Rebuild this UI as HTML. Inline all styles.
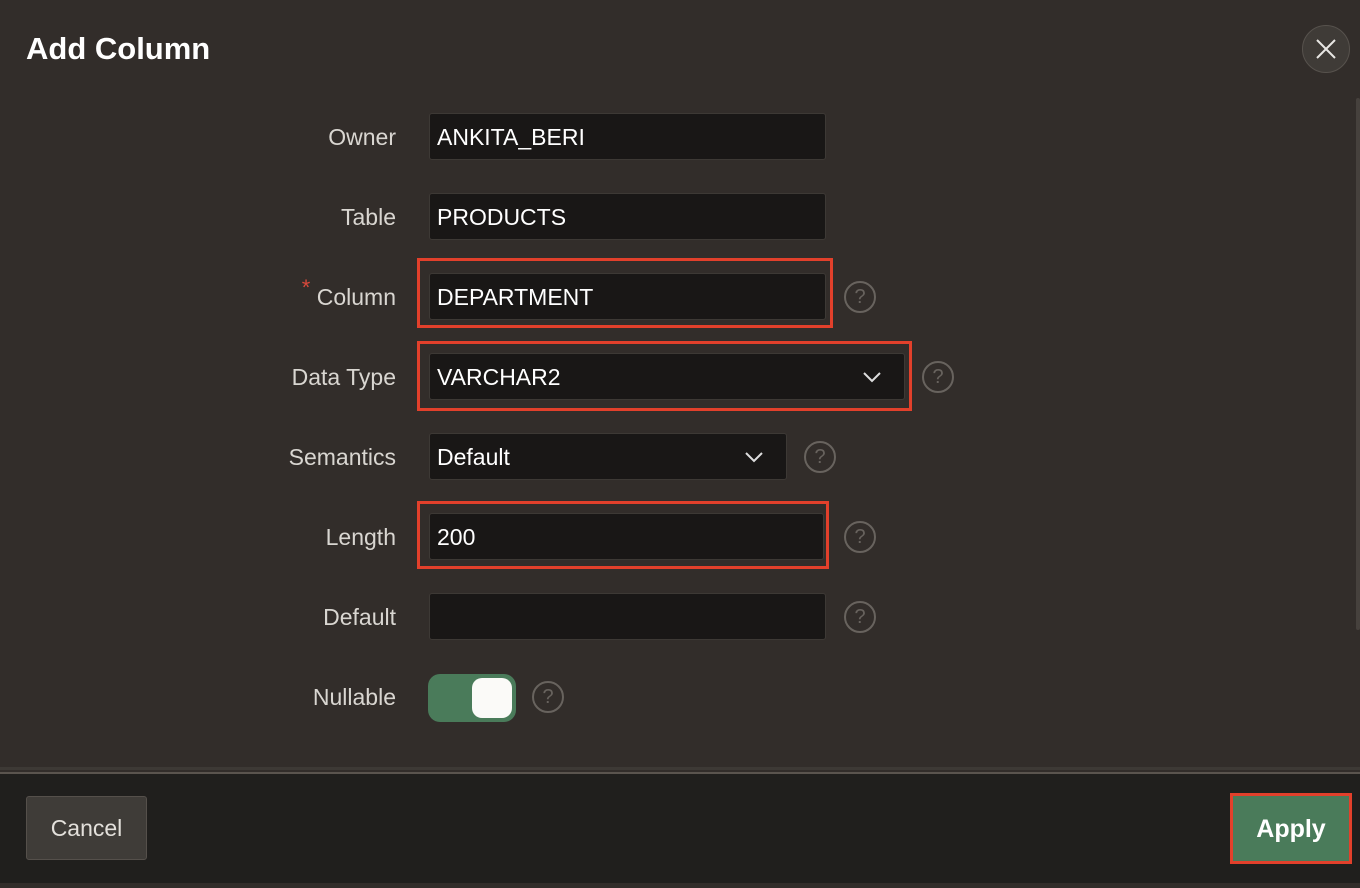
<!DOCTYPE html>
<html><head><meta charset="utf-8"><style>
*{box-sizing:border-box;margin:0;padding:0}
body{width:1360px;height:888px;background:#322d2a;font-family:"Liberation Sans",sans-serif;position:relative;overflow:hidden}
.abs{position:absolute}
h1{position:absolute;left:26px;top:31px;font-size:31px;font-weight:bold;color:#fff;letter-spacing:0px}
.close{left:1302px;top:25px;width:48px;height:48px;border-radius:50%;background:#3f3b37;border:1px solid #57524d}
.lbl{position:absolute;right:964px;font-size:23px;color:#d9d6d1;text-align:right;height:46px;line-height:48px}
.inp{position:absolute;left:429px;height:47px;background:#191716;border:1px solid #3d3935;border-radius:3px;color:#fff;font-size:23px;line-height:47px;padding-left:7px}
.red{position:absolute;border:3px solid #e2402b}
.help{position:absolute;width:32px;height:32px;border-radius:50%;border:2px solid #68635e;color:#68635e;font-size:20px;text-align:center;line-height:28px}
.chev{position:absolute;top:15px}
</style></head><body>
<h1>Add Column</h1>
<div class="abs close"><svg width="48" height="48" style="position:absolute;left:-1px;top:-1px"><path d="M15 15L33 33M33 15L15 33" stroke="#e8e6e3" stroke-width="2"/></svg></div>
<div class="abs" style="left:1356px;top:98px;width:4px;height:532px;background:#46413d;border-radius:2px"></div>

<div class="lbl" style="top:113px">Owner</div>
<div class="inp" style="top:113px;width:397px">ANKITA_BERI</div>

<div class="lbl" style="top:193px">Table</div>
<div class="inp" style="top:193px;width:397px">PRODUCTS</div>

<div class="lbl" style="top:273px"><span style="color:#d9493b;position:relative;top:-10px;font-size:22px">*</span> Column</div>
<div class="red" style="left:417px;top:258px;width:416px;height:70px"></div>
<div class="inp" style="top:273px;width:397px">DEPARTMENT</div>
<div class="help" style="left:844px;top:281px">?</div>

<div class="lbl" style="top:353px">Data Type</div>
<div class="red" style="left:417px;top:341px;width:495px;height:70px"></div>
<div class="inp" style="top:353px;width:476px">VARCHAR2<svg class="chev" style="left:432px" width="20" height="16"><path d="M2 4L10 12L18 4" stroke="#ddd" stroke-width="2" fill="none"/></svg></div>
<div class="help" style="left:922px;top:361px">?</div>

<div class="lbl" style="top:433px">Semantics</div>
<div class="inp" style="top:433px;width:358px">Default<svg class="chev" style="left:314px" width="20" height="16"><path d="M2 4L10 12L18 4" stroke="#ddd" stroke-width="2" fill="none"/></svg></div>
<div class="help" style="left:804px;top:441px">?</div>

<div class="lbl" style="top:513px">Length</div>
<div class="red" style="left:417px;top:501px;width:412px;height:68px"></div>
<div class="inp" style="top:513px;width:395px">200</div>
<div class="help" style="left:844px;top:521px">?</div>

<div class="lbl" style="top:593px">Default</div>
<div class="inp" style="top:593px;width:397px"></div>
<div class="help" style="left:844px;top:601px">?</div>

<div class="lbl" style="top:673px">Nullable</div>
<div class="abs" style="left:428px;top:674px;width:88px;height:48px;border-radius:12px;background:#4a7b5a"></div>
<div class="abs" style="left:472px;top:678px;width:40px;height:40px;border-radius:10px;background:#fbfaf8"></div>
<div class="help" style="left:532px;top:681px">?</div>

<div class="abs" style="left:0;top:767px;width:1360px;height:3px;background:#3d3935"></div>
<div class="abs" style="left:0;top:772px;width:1360px;height:116px;background:#201f1d;border-top:2px solid #5a544e"></div>
<div class="abs" style="left:26px;top:796px;width:121px;height:64px;background:#3f3c38;border:1px solid #55504b;border-radius:3px;color:#e3e0db;font-size:23px;text-align:center;line-height:62px">Cancel</div>
<div class="abs" style="left:1230px;top:793px;width:122px;height:71px;border:3px solid #e2402b;background:#4a7b5a;color:#fff;font-size:25px;font-weight:bold;text-align:center;line-height:67px">Apply</div>
<div class="abs" style="left:0;top:883px;width:1360px;height:5px;background:#322d2a"></div>
</body></html>
